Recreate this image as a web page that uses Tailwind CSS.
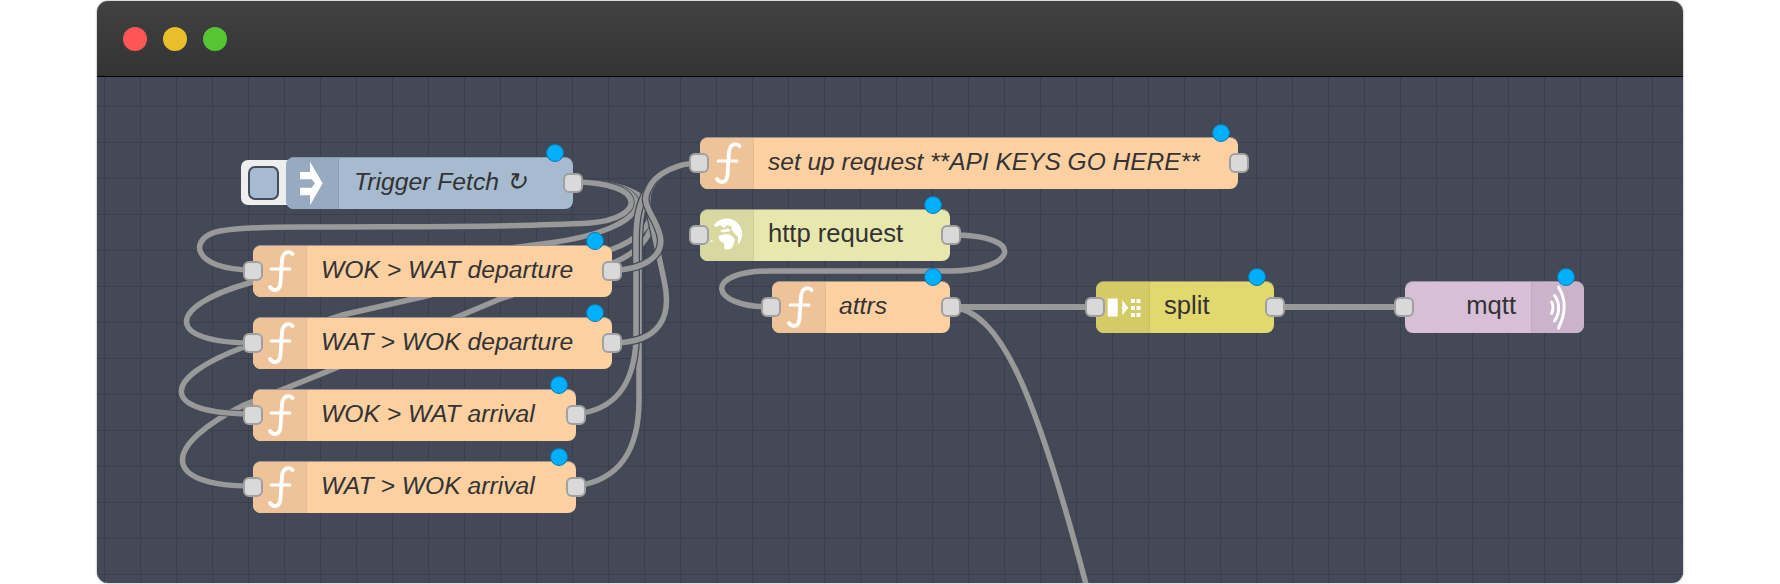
<!DOCTYPE html>
<html lang="en">
<head>
<meta charset="utf-8">
<title>Flow</title>
<script src="https://cdn.jsdelivr.net/npm/@tailwindcss/browser@4"></script>
</head>
<body class="bg-white">
<div class="w-[1780px] h-[584px] pl-[97px] pr-[97px] pt-px pb-px font-['Liberation_Sans',sans-serif] text-[#333] overflow-hidden">
  <div class="w-[1586px] h-[582px] flex flex-col rounded-[11px] overflow-hidden shadow-[0_0_2px_rgba(0,0,0,0.5)]">
    <div class="h-[76px] shrink-0 flex items-center gap-4 pl-[26px] bg-gradient-to-b from-[#424242] to-[#333333] border-b border-black">
      <span class="w-6 h-6 rounded-full bg-[#fd5655]"></span>
      <span class="w-6 h-6 rounded-full bg-[#e8bf2a]"></span>
      <span class="w-6 h-6 rounded-full bg-[#55c534]"></span>
    </div>
    <div class="relative flex-1 overflow-hidden bg-[#434956] bg-[linear-gradient(to_right,#3a3f4b_1px,transparent_1px),linear-gradient(to_bottom,#3a3f4b_1px,transparent_1px)] bg-[size:36px_36px] bg-[position:7px_29px]">
      <div class="absolute left-[-97px] top-[-77px] w-[1780px] h-[584px] text-[24.7px] leading-[47px]">

        <svg class="absolute left-0 top-0" width="1780" height="584" viewBox="0 0 1780 584" fill="none" stroke-linecap="round" stroke-linejoin="round">
          <defs>
            <path id="a1" d="M573 182 C650 182 645 219 590 223 C500 228 400 226 300 227 C270 227 240 228 220 231 C188 237 190 270 253 270"/>
            <path id="a2" d="M573 182 C660 182 660 226 556 242 C480 254 330 264 249 283 C165 307 165 343 253 343"/>
            <path id="a3" d="M573 182 C670 182 668 230 610 250 L422 297 L342 315 L244 347 C160 378 158 414 253 414"/>
            <path id="a4" d="M573 182 C672 182 668 240 615 262 L500 299 L331 370 L244 405 C163 445 158 486 253 486"/>
            <path id="f1" d="M612 270 C645 270 665 255 660 235 C655 215 640 205 648 190 C655 172 680 163 699 163"/>
            <path id="f2" d="M612 343 C662 343 672 315 664 280 L648 205 C645 185 665 163 699 163"/>
            <path id="f3" d="M576 414 C615 410 634 385 636 340 L636 240 C636 215 640 202 648 188 C656 172 680 163 699 163"/>
            <path id="f4" d="M576 486 C620 480 639 450 639 400 L639 250 C639 220 642 204 650 188 C658 172 680 163 699 163"/>
            <path id="h1" d="M951 235 C1030 235 1015 271 950 271 L770 271 C703 271 708 307 771 307"/>
            <path id="t1" d="M951 307 C1000 310 1035 390 1087 588"/>
          </defs>
          <g stroke="#434956" stroke-width="8"><use href="#t1"/></g>
          <g stroke="#999999" stroke-width="5.5"><use href="#t1"/></g>
          <path d="M951 307 H1095 M1275 307 H1405" stroke="#999999" stroke-width="6"/>
          <g stroke="#434956" stroke-width="8"><use href="#h1"/></g>
          <g stroke="#999999" stroke-width="5.5"><use href="#h1"/></g>
          <g stroke="#434956" stroke-width="7"><use href="#a4"/></g>
          <g stroke="#999999" stroke-width="5.5"><use href="#a4"/></g>
          <g stroke="#434956" stroke-width="7"><use href="#a3"/></g>
          <g stroke="#999999" stroke-width="5.5"><use href="#a3"/></g>
          <g stroke="#434956" stroke-width="7"><use href="#a2"/></g>
          <g stroke="#999999" stroke-width="5.5"><use href="#a2"/></g>
          <g stroke="#434956" stroke-width="7"><use href="#a1"/></g>
          <g stroke="#999999" stroke-width="5.5"><use href="#a1"/></g>
          <g stroke="#434956" stroke-width="8"><use href="#f4"/></g>
          <g stroke="#999999" stroke-width="5.5"><use href="#f4"/></g>
          <g stroke="#434956" stroke-width="8"><use href="#f3"/></g>
          <g stroke="#999999" stroke-width="5.5"><use href="#f3"/></g>
          <g stroke="#434956" stroke-width="8"><use href="#f2"/></g>
          <g stroke="#999999" stroke-width="5.5"><use href="#f2"/></g>
          <g stroke="#434956" stroke-width="8"><use href="#f1"/></g>
          <g stroke="#999999" stroke-width="5.5"><use href="#f1"/></g>
        </svg>

        <!-- Inject button -->
        <div class="absolute left-[241px] top-[160px] w-[50px] h-[45px] rounded-l-[7px] bg-[#eeeeee] flex items-center pl-[7px]">
          <span class="block w-[31px] h-[34px] rounded-[7px] bg-[#a6bbcf] border-2 border-[#444c5c]"></span>
        </div>

        <!-- Trigger Fetch -->
        <div class="absolute left-[286px] top-[157px] w-[287px] h-[52px] flex rounded-[8px] bg-[#a6bbcf] border-t border-[#8c98a6]">
          <div class="w-[53px] h-full shrink-0 rounded-l-[8px] bg-[#96abc0] border-r border-[#8ca0b5]">
            <svg width="52" height="52" viewBox="0 0 52 52" fill="#fff"><polygon points="24,3.7 36.7,25.3 24,47.3 24,37.3 14,37.3 14,29.7 25.7,29.7 29,25.3 25.7,21.3 14,21.3 14,14 24,14"/></svg>
          </div>
          <div class="pl-[15px] italic whitespace-nowrap">Trigger Fetch ↻</div>
          <span class="absolute left-[277px] top-[15px] w-5 h-5 rounded-[6px] bg-[#d9d9d9] border-2 border-[#a0a0a0]"></span>
          <span class="absolute left-[260px] top-[-14px] w-[18px] h-[18px] rounded-full bg-[#00b0ff] border border-[#0a78b0]"></span>
        </div>

        <!-- WOK > WAT departure -->
        <div class="absolute left-[253px] top-[245px] w-[359px] h-[52px] flex rounded-[8px] bg-[#fdd0a2] border-t border-[#9a9490]">
          <div class="w-[54px] h-full shrink-0 rounded-l-[8px] bg-[#efc39a] border-r border-[#e6b98f]">
            <svg width="53" height="52" viewBox="0 0 53 52" fill="none" stroke="#fff" stroke-linecap="round"><path d="M39.5 8 C35 4.5 30 6 29 14 L27.5 36 C27 45 21 46 17 41" stroke-width="3.8"/><path d="M18 23 H37" stroke-width="3"/></svg>
          </div>
          <div class="pl-[14px] italic whitespace-nowrap">WOK &gt; WAT departure</div>
          <span class="absolute left-[-10px] top-[15px] w-5 h-5 rounded-[6px] bg-[#d9d9d9] border-2 border-[#a0a0a0]"></span>
          <span class="absolute left-[349px] top-[15px] w-5 h-5 rounded-[6px] bg-[#d9d9d9] border-2 border-[#a0a0a0]"></span>
          <span class="absolute left-[333px] top-[-14px] w-[18px] h-[18px] rounded-full bg-[#00b0ff] border border-[#0a78b0]"></span>
        </div>

        <!-- WAT > WOK departure -->
        <div class="absolute left-[253px] top-[317px] w-[359px] h-[52px] flex rounded-[8px] bg-[#fdd0a2] border-t border-[#9a9490]">
          <div class="w-[54px] h-full shrink-0 rounded-l-[8px] bg-[#efc39a] border-r border-[#e6b98f]">
            <svg width="53" height="52" viewBox="0 0 53 52" fill="none" stroke="#fff" stroke-linecap="round"><path d="M39.5 8 C35 4.5 30 6 29 14 L27.5 36 C27 45 21 46 17 41" stroke-width="3.8"/><path d="M18 23 H37" stroke-width="3"/></svg>
          </div>
          <div class="pl-[14px] italic whitespace-nowrap">WAT &gt; WOK departure</div>
          <span class="absolute left-[-10px] top-[15px] w-5 h-5 rounded-[6px] bg-[#d9d9d9] border-2 border-[#a0a0a0]"></span>
          <span class="absolute left-[349px] top-[15px] w-5 h-5 rounded-[6px] bg-[#d9d9d9] border-2 border-[#a0a0a0]"></span>
          <span class="absolute left-[333px] top-[-14px] w-[18px] h-[18px] rounded-full bg-[#00b0ff] border border-[#0a78b0]"></span>
        </div>

        <!-- WOK > WAT arrival -->
        <div class="absolute left-[253px] top-[389px] w-[323px] h-[52px] flex rounded-[8px] bg-[#fdd0a2] border-t border-[#9a9490]">
          <div class="w-[54px] h-full shrink-0 rounded-l-[8px] bg-[#efc39a] border-r border-[#e6b98f]">
            <svg width="53" height="52" viewBox="0 0 53 52" fill="none" stroke="#fff" stroke-linecap="round"><path d="M39.5 8 C35 4.5 30 6 29 14 L27.5 36 C27 45 21 46 17 41" stroke-width="3.8"/><path d="M18 23 H37" stroke-width="3"/></svg>
          </div>
          <div class="pl-[14px] italic whitespace-nowrap">WOK &gt; WAT arrival</div>
          <span class="absolute left-[-10px] top-[15px] w-5 h-5 rounded-[6px] bg-[#d9d9d9] border-2 border-[#a0a0a0]"></span>
          <span class="absolute left-[313px] top-[15px] w-5 h-5 rounded-[6px] bg-[#d9d9d9] border-2 border-[#a0a0a0]"></span>
          <span class="absolute left-[297px] top-[-14px] w-[18px] h-[18px] rounded-full bg-[#00b0ff] border border-[#0a78b0]"></span>
        </div>

        <!-- WAT > WOK arrival -->
        <div class="absolute left-[253px] top-[461px] w-[323px] h-[52px] flex rounded-[8px] bg-[#fdd0a2] border-t border-[#9a9490]">
          <div class="w-[54px] h-full shrink-0 rounded-l-[8px] bg-[#efc39a] border-r border-[#e6b98f]">
            <svg width="53" height="52" viewBox="0 0 53 52" fill="none" stroke="#fff" stroke-linecap="round"><path d="M39.5 8 C35 4.5 30 6 29 14 L27.5 36 C27 45 21 46 17 41" stroke-width="3.8"/><path d="M18 23 H37" stroke-width="3"/></svg>
          </div>
          <div class="pl-[14px] italic whitespace-nowrap">WAT &gt; WOK arrival</div>
          <span class="absolute left-[-10px] top-[15px] w-5 h-5 rounded-[6px] bg-[#d9d9d9] border-2 border-[#a0a0a0]"></span>
          <span class="absolute left-[313px] top-[15px] w-5 h-5 rounded-[6px] bg-[#d9d9d9] border-2 border-[#a0a0a0]"></span>
          <span class="absolute left-[297px] top-[-14px] w-[18px] h-[18px] rounded-full bg-[#00b0ff] border border-[#0a78b0]"></span>
        </div>

        <!-- set up request -->
        <div class="absolute left-[700px] top-[137px] w-[538px] h-[52px] flex rounded-[8px] bg-[#fdd0a2] border-t border-[#9a9490]">
          <div class="w-[54px] h-full shrink-0 rounded-l-[8px] bg-[#efc39a] border-r border-[#e6b98f]">
            <svg width="53" height="52" viewBox="0 0 53 52" fill="none" stroke="#fff" stroke-linecap="round"><path d="M39.5 8 C35 4.5 30 6 29 14 L27.5 36 C27 45 21 46 17 41" stroke-width="3.8"/><path d="M18 23 H37" stroke-width="3"/></svg>
          </div>
          <div class="pl-[14px] text-[24.5px] italic whitespace-nowrap">set up request **API KEYS GO HERE**</div>
          <span class="absolute left-[-11px] top-[15px] w-5 h-5 rounded-[6px] bg-[#d9d9d9] border-2 border-[#a0a0a0]"></span>
          <span class="absolute left-[529px] top-[15px] w-5 h-5 rounded-[6px] bg-[#d9d9d9] border-2 border-[#a0a0a0]"></span>
          <span class="absolute left-[512px] top-[-14px] w-[18px] h-[18px] rounded-full bg-[#00b0ff] border border-[#0a78b0]"></span>
        </div>

        <!-- http request -->
        <div class="absolute left-[700px] top-[209px] w-[250px] h-[52px] flex rounded-[8px] bg-[#e7e7ae] border-t border-[#99998a]">
          <div class="w-[54px] h-full shrink-0 rounded-l-[8px] bg-[#d8d8a0] border-r border-[#cfcf98]">
            <svg width="53" height="52" viewBox="0 0 53 52" fill="#fff">
              <defs><clipPath id="globe"><circle cx="26.7" cy="24" r="15.5"/></clipPath></defs>
              <g clip-path="url(#globe)">
                <polygon points="12,14 20,6 34,6 38,13 33,17 27,15 24,18 20,15 16,17"/>
                <polygon points="31,18 38,13 46,18 46,32 38,36 38,27 35,24 33,22"/>
                <polygon points="18.3,26 25,24 30,24.5 35,29 33,36 29,42 25,42 23.7,32.7 20,31"/>
                <polygon points="20,20.5 28,18.5 31,21 26,22 22,22.5"/>
              </g>
              <circle cx="11.7" cy="31" r="1"/>
            </svg>
          </div>
          <div class="pl-[14px] text-[25.6px] whitespace-nowrap">http request</div>
          <span class="absolute left-[-11px] top-[15px] w-5 h-5 rounded-[6px] bg-[#d9d9d9] border-2 border-[#a0a0a0]"></span>
          <span class="absolute left-[241px] top-[15px] w-5 h-5 rounded-[6px] bg-[#d9d9d9] border-2 border-[#a0a0a0]"></span>
          <span class="absolute left-[224px] top-[-14px] w-[18px] h-[18px] rounded-full bg-[#00b0ff] border border-[#0a78b0]"></span>
        </div>

        <!-- attrs -->
        <div class="absolute left-[772px] top-[281px] w-[178px] h-[52px] flex rounded-[8px] bg-[#fdd0a2] border-t border-[#9a9490]">
          <div class="w-[54px] h-full shrink-0 rounded-l-[8px] bg-[#efc39a] border-r border-[#e6b98f]">
            <svg width="53" height="52" viewBox="0 0 53 52" fill="none" stroke="#fff" stroke-linecap="round"><path d="M39.5 8 C35 4.5 30 6 29 14 L27.5 36 C27 45 21 46 17 41" stroke-width="3.8"/><path d="M18 23 H37" stroke-width="3"/></svg>
          </div>
          <div class="pl-[13px] italic whitespace-nowrap">attrs</div>
          <span class="absolute left-[-11px] top-[15px] w-5 h-5 rounded-[6px] bg-[#d9d9d9] border-2 border-[#a0a0a0]"></span>
          <span class="absolute left-[169px] top-[15px] w-5 h-5 rounded-[6px] bg-[#d9d9d9] border-2 border-[#a0a0a0]"></span>
          <span class="absolute left-[152px] top-[-14px] w-[18px] h-[18px] rounded-full bg-[#00b0ff] border border-[#0a78b0]"></span>
        </div>

        <!-- split -->
        <div class="absolute left-[1096px] top-[281px] w-[178px] h-[52px] flex rounded-[8px] bg-[#e2d96e] border-t border-[#9a9670]">
          <div class="w-[54px] h-full shrink-0 rounded-l-[8px] bg-[#d4cb66] border-r border-[#ccc35f]">
            <svg width="53" height="52" viewBox="0 0 53 52" fill="#fff">
              <rect x="11.7" y="16.5" width="10" height="18"/>
              <polygon points="26.3,18 32.3,25.7 26.3,33.3"/>
              <rect x="35" y="17" width="4" height="4"/><rect x="40.5" y="17" width="4" height="4"/>
              <rect x="35" y="24" width="4" height="4"/><rect x="40.5" y="24" width="4" height="4"/>
              <rect x="35" y="31" width="4" height="4"/><rect x="40.5" y="31" width="4" height="4"/>
            </svg>
          </div>
          <div class="pl-[14px] text-[25.6px] whitespace-nowrap">split</div>
          <span class="absolute left-[-11px] top-[15px] w-5 h-5 rounded-[6px] bg-[#d9d9d9] border-2 border-[#a0a0a0]"></span>
          <span class="absolute left-[169px] top-[15px] w-5 h-5 rounded-[6px] bg-[#d9d9d9] border-2 border-[#a0a0a0]"></span>
          <span class="absolute left-[152px] top-[-14px] w-[18px] h-[18px] rounded-full bg-[#00b0ff] border border-[#0a78b0]"></span>
        </div>

        <!-- mqtt -->
        <div class="absolute left-[1405px] top-[281px] w-[179px] h-[52px] flex justify-end rounded-[8px] bg-[#d8bfd8] border-t border-[#9a929a]">
          <div class="pr-[15px] text-[25.6px] whitespace-nowrap">mqtt</div>
          <div class="w-[53px] h-full shrink-0 rounded-r-[8px] bg-[#cbb4cb] border-l border-[#c1aac1]">
            <svg width="52" height="52" viewBox="0 0 52 52" fill="none" stroke="#fff" stroke-width="3" stroke-linecap="round">
              <path d="M26.5 5 C34 17 34 31 26.5 46"/>
              <path d="M22.5 13.5 C28 21 28 31 22.5 39"/>
              <path d="M19.5 20 C21.5 23 21.5 28 19.5 31.5"/>
            </svg>
          </div>
          <span class="absolute left-[-11px] top-[15px] w-5 h-5 rounded-[6px] bg-[#d9d9d9] border-2 border-[#a0a0a0]"></span>
          <span class="absolute left-[152px] top-[-14px] w-[18px] h-[18px] rounded-full bg-[#00b0ff] border border-[#0a78b0]"></span>
        </div>

      </div>
    </div>
  </div>
</div>
</body>
</html>
